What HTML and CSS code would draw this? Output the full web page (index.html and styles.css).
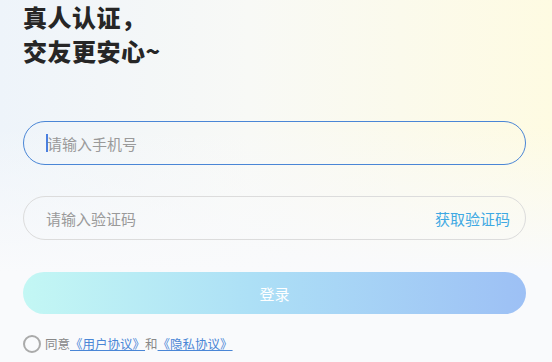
FILE: index.html
```html
<!DOCTYPE html>
<html lang="zh-CN">
<head>
    <meta charset="UTF-8">
    <meta name="viewport" content="width=device-width, initial-scale=1.0">
    <title>登录</title>
    <link rel="stylesheet" href="styles.css">
</head>
<body>
    <div class="page">
        <h1 class="title">真人认证，<br>交友更安心~</h1>

        <div class="field field-active">
            <span class="caret"></span>
            <span class="placeholder">请输入手机号</span>
        </div>

        <div class="field">
            <span class="placeholder">请输入验证码</span>
            <span class="get-code">获取验证码</span>
        </div>

        <div class="login-btn">登录</div>

        <div class="agree">
            <span class="radio"></span>
            <span>同意</span>
            <a class="link">《用户协议》</a>
            <span>和</span>
            <a class="link">《隐私协议》</a>
        </div>
    </div>
</body>
</html>
```

FILE: styles.css
```css
html, body {
    margin: 0;
    height: 100%;
}
body {
    font-family: "Noto Sans CJK SC", "Noto Sans", sans-serif;
    background:
        linear-gradient(180deg, rgba(249,250,252,0) 0%, rgba(249,250,252,0) 35%, #f9fafc 75%),
        linear-gradient(90deg, #eef4fa 0%, #f8f9f6 45%, #fefbe2 100%);
    overflow: hidden;
}
.page {
    padding: 0 26px 0 23px;
}
.title {
    margin: 0;
    font-size: 24px;
    line-height: 34px;
    font-weight: 900;
    color: #262626;
    letter-spacing: 0.5px;
}
.field {
    display: flex;
    align-items: center;
    height: 44px;
    box-sizing: border-box;
    border: 1px solid #dcdcdc;
    border-radius: 22px;
    padding: 0 15px 0 22px;
    margin-top: 31px;
    font-size: 15px;
}
.field-active {
    border-color: #4a86d6;
    margin-top: 53px;
}
.caret {
    width: 2px;
    height: 18px;
    background: #4a7fe0;
    margin-right: -1px;
}
.placeholder {
    color: #9a9a9a;
    flex: 1;
}
.get-code {
    color: #3fa9e3;
}
.login-btn {
    margin-top: 32px;
    height: 42px;
    border-radius: 21px;
    background: linear-gradient(90deg, #c3f7f4 0%, #ade0f6 45%, #9dc0f5 100%);
    color: #fff;
    font-size: 15px;
    display: flex;
    align-items: center;
    justify-content: center;
}
.agree {
    display: flex;
    align-items: center;
    margin-top: 20px;
    font-size: 12.5px;
    color: #888;
}
.radio {
    width: 14px;
    height: 14px;
    border: 2px solid #aaa;
    border-radius: 50%;
    margin-right: 4px;
}
.link {
    color: #4a86d6;
    text-decoration: underline;
}
```
